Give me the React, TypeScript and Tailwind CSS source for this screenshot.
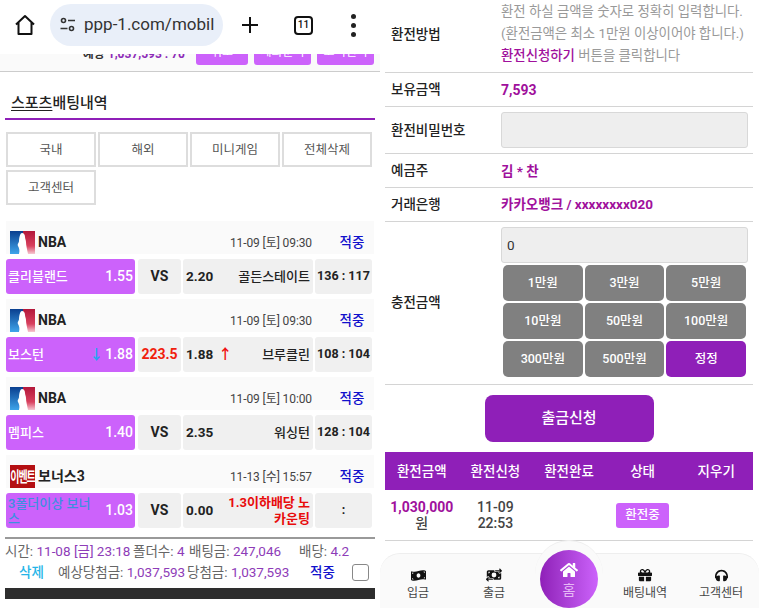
import React from 'react';
import { FaMoneyBillWave, FaGift, FaHome, FaHeadphones } from 'react-icons/fa';
import { FaMoneyBillTransfer } from 'react-icons/fa6';

const FONT = "font-['Roboto','Noto_Sans_CJK_KR',sans-serif]";

const games = [
  { logo: 'nba', league: 'NBA', time: '11-09 [토] 09:30', home: '클리블랜드', homeOdds: '1.55', mid: 'VS', awayOdds: '2.20', away: '골든스테이트', score: '136 : 117' },
  { logo: 'nba', league: 'NBA', time: '11-09 [토] 09:30', home: '보스턴', homeOdds: '1.88', mid: '223.5', awayOdds: '1.88', away: '브루클린', score: '108 : 104', arrows: true },
  { logo: 'nba', league: 'NBA', time: '11-09 [토] 10:00', home: '멤피스', homeOdds: '1.40', mid: 'VS', awayOdds: '2.35', away: '워싱턴', score: '128 : 104' },
  { logo: 'event', league: '보너스3', time: '11-13 [수] 15:57', home: '3폴더이상 보너스', homeOdds: '1.03', mid: 'VS', awayOdds: '0.00', away: '1.3이하배당 노카운팅', score: ':', bonus: true },
];

function NbaLogo() {
  return (
    <svg width="25" height="23" viewBox="0 0 25 23" className="shrink-0">
      <defs>
        <linearGradient id="nbaBlue" x1="0" y1="0" x2="0" y2="1">
          <stop offset="0" stopColor="#0a3f8f" />
          <stop offset="1" stopColor="#3fa4ea" />
        </linearGradient>
        <linearGradient id="nbaRed" x1="0" y1="0" x2="0" y2="1">
          <stop offset="0" stopColor="#b3173a" />
          <stop offset="0.65" stopColor="#d8405e" />
          <stop offset="1" stopColor="#f6c8d2" />
        </linearGradient>
      </defs>
      <rect width="13" height="23" fill="url(#nbaBlue)" />
      <rect x="13" width="12" height="23" fill="url(#nbaRed)" />
      <path d="M12 2c2 0 3 2 3 4 0 2 1 3 1 5 0 3 1 7 2 12H9c1-4 0-6-1-8-1-2 1-3 1-5 0-3 1-8 3-8z" fill="#fff" />
    </svg>
  );
}

function EventLogo() {
  return (
    <div className="w-[25px] h-[23px] shrink-0 bg-[#b40f12] flex items-center justify-center text-white text-[10px] font-bold leading-none tracking-[-1px] overflow-hidden">
      <span className="scale-y-150">이벤트</span>
    </div>
  );
}

function Game({ game }: { game: (typeof games)[number] }) {
  return (
    <div className="mb-[5px]">
      <div className="h-[33px] bg-[#fafafa] flex items-center pl-[4px] pt-[10px] mb-[5px]">
        {game.logo === 'nba' ? <NbaLogo /> : <EventLogo />}
        <span className="ml-[3px] text-[14px] font-bold text-[#222] flex-1">{game.league}</span>
        <span className="text-[12px] tracking-[-0.1px] text-[#444] mr-[2px]">{game.time}</span>
        <span className="w-[60px] pl-[16px] text-center text-[13.5px] font-medium text-[#1010cc]">적중</span>
      </div>
      <div className="flex h-[35px] gap-[2px] text-[13px]">
        <div className="w-[129px] mr-px bg-[#cc62fb] rounded-[3px] flex items-center justify-between px-[2px] font-medium text-white">
          <span className={game.bonus ? 'text-[#3d8fe0] leading-[15px] w-[92px]' : ''}>{game.home}</span>
          <span className="flex items-center gap-[2px] text-[14px] shrink-0">
            {game.arrows && <span className="text-[#25a5f0] text-[14px] font-bold">↓</span>}
            {game.homeOdds}
          </span>
        </div>
        <div className={`w-[43px] bg-[#f0f0f0] rounded-[3px] flex items-center justify-center font-bold text-[14px] ${game.mid === 'VS' ? 'text-[#222]' : 'text-[#f0200c]'}`}>
          {game.mid}
        </div>
        <div className="w-[130px] bg-[#f0f0f0] rounded-[3px] flex items-center justify-between px-[3px] font-medium text-[#222]">
          <span className="font-bold text-[13.5px] flex items-center gap-[5px] shrink-0">
            {game.awayOdds}
            {game.arrows && <span className="text-[#f01010] text-[14px]">↑</span>}
          </span>
          <span className={game.bonus ? 'text-[#e80c0c] font-bold text-right leading-[16px] w-[86px]' : ''}>{game.away}</span>
        </div>
        <div className="w-[57px] bg-[#f0f0f0] rounded-[3px] flex items-center justify-center font-bold text-[#222] text-[12.5px]">
          {game.score}
        </div>
      </div>
    </div>
  );
}

function LeftPanel() {
  return (
    <div className="w-[380px] shrink-0 flex flex-col bg-white">
      <div className="h-[54px] pb-[4px] flex items-center shrink-0">
        <svg width="24" height="24" viewBox="0 0 24 24" fill="none" stroke="#111" strokeWidth="2" className="ml-[13px]">
          <path d="M3 11.5 12 3l9 8.5M5.5 9.5V21h13V9.5" strokeLinejoin="round" />
        </svg>
        <div className="ml-[13px] w-[173px] h-[42px] rounded-full bg-[#e9eff9] flex items-center pl-[9px] pr-[9px] overflow-hidden">
          <svg width="18" height="16" viewBox="0 0 18 16" fill="none" stroke="#333" strokeWidth="1.6" className="shrink-0">
            <circle cx="4.5" cy="3.5" r="2" />
            <path d="M9 3.5h7M1.5 11.5h7" />
            <circle cx="12.5" cy="11.5" r="2" />
          </svg>
          <span className="ml-[7px] text-[17px] text-[#333] whitespace-nowrap overflow-hidden">ppp-1.com/mobile</span>
        </div>
        <svg width="20" height="20" viewBox="0 0 20 20" stroke="#111" strokeWidth="2" className="ml-[17px]">
          <path d="M10 2v16M2 10h16" />
        </svg>
        <div className="ml-[34px] w-[19px] h-[19px] border-2 border-[#111] rounded-[4px] flex items-center justify-center text-[10px] font-medium text-[#111] leading-none">
          11
        </div>
        <div className="ml-[38px] flex flex-col gap-[4px]">
          <span className="w-[5px] h-[5px] rounded-full bg-[#222]" />
          <span className="w-[5px] h-[5px] rounded-full bg-[#222]" />
          <span className="w-[5px] h-[5px] rounded-full bg-[#222]" />
        </div>
      </div>

      <div className="h-[18px] shrink-0 bg-[#fafafa] border-b border-[#ccc] overflow-hidden flex justify-end items-end gap-[6px] pr-[6px] pb-[6px] text-[12px]">
        <span className="mr-[5px] text-[#8e2bb8] font-bold leading-[20px] mb-[1px]"><span className="text-[#333]">예상 </span>1,037,593 : 70</span>
        <div className="w-[52px] h-[22px] shrink-0 bg-[#cc62fb] rounded-[3px] text-white text-center">취소</div>
        <div className="w-[57px] h-[22px] shrink-0 bg-[#cc62fb] rounded-[3px] text-white text-center">계좌문의</div>
        <div className="w-[57px] h-[22px] shrink-0 bg-[#cc62fb] rounded-[3px] text-white text-center">고객센터</div>
      </div>

      <div className="mx-[5px] mt-[19px] pl-[6px] pb-[3px] border-b-2 border-[#8f1fb8] text-[15px] font-medium text-[#222] leading-[24px]">
        <span className="underline underline-offset-2">스포츠</span>배팅내역
      </div>

      <div className="grid grid-cols-[90px_90px_90px_90px] gap-x-[2px] gap-y-[3px] ml-[6px] mt-[12px] text-[12.5px] text-[#555]">
        {['국내', '해외', '미니게임', '전체삭제', '고객센터'].map((label) => (
          <div key={label} className="h-[35px] pt-[2px] border-2 border-[#ddd] flex items-center justify-center">{label}</div>
        ))}
      </div>

      <div className="mx-[6px] mt-[16px]">
        {games.map((g, i) => <Game key={i} game={g} />)}
      </div>

      <div className="mx-[5px] mt-[4px] border-t-2 border-[#999] pt-[2px] text-[13.5px] text-[#666] leading-[21px]">
        <div className="flex whitespace-nowrap">
          <span className="w-[128px] shrink-0">시간: <span className="text-[#8e3cb8]">11-08 [금] 23:18</span></span>
          <span className="w-[56px] shrink-0">폴더수: <span className="text-[#8e3cb8]">4</span></span>
          <span className="w-[110px] shrink-0">배팅금: <span className="text-[#8e3cb8]">247,046</span></span>
          <span>배당: <span className="text-[#8e3cb8]">4.2</span></span>
        </div>
        <div className="flex items-center whitespace-nowrap">
          <span className="ml-[14px] w-[39px] shrink-0 text-[#25b5e8] font-medium">삭제</span>
          <span className="w-[129px] shrink-0">예상당첨금: <span className="text-[#8e3cb8]">1,037,593</span></span>
          <span className="w-[123px] shrink-0">당첨금: <span className="text-[#8e3cb8]">1,037,593</span></span>
          <span className="w-[42px] shrink-0 text-[#1010cc] font-medium">적중</span>
          <span className="w-[17px] h-[17px] shrink-0 border border-[#888] rounded-[3px] bg-white" />
        </div>
      </div>
      <div className="mx-[5px] mt-[5px] h-[11px] bg-[#2e2e2e] shrink-0" />
    </div>
  );
}

function FormRow({ label, heightClass, children }: { label: string; heightClass: string; children: React.ReactNode }) {
  return (
    <div className={`flex items-center border-b border-[#d4d4d4] ${heightClass}`}>
      <div className="w-[116px] pl-[6px] text-[13.5px] font-medium text-[#222] shrink-0">{label}</div>
      <div className="flex-1">{children}</div>
    </div>
  );
}

function RightPanel() {
  const amounts = ['1만원', '3만원', '5만원', '10만원', '50만원', '100만원', '300만원', '500만원'];
  return (
    <div className="w-[379px] shrink-0 pl-[5px] pr-[6px] bg-white">
      <FormRow label="환전방법" heightClass="h-[73px] pb-[4px]">
        <div className="text-[13.4px] leading-[22px] text-[#999] whitespace-nowrap">
          <div>환전 하실 금액을 숫자로 정확히 입력합니다.</div>
          <div>(환전금액은 최소 1만원 이상이어야 합니다.)</div>
          <div><span className="text-[#a0109c] font-medium">환전신청하기</span> 버튼을 클릭합니다</div>
        </div>
      </FormRow>
      <FormRow label="보유금액" heightClass="h-[34px]">
        <span className="text-[14px] font-bold text-[#a0109c]">7,593</span>
      </FormRow>
      <FormRow label="환전비밀번호" heightClass="h-[47px]">
        <div className="w-[247px] h-[36px] bg-[#eee] border border-[#d8d8d8] rounded-[3px]" />
      </FormRow>
      <FormRow label="예금주" heightClass="h-[34px]">
        <span className="text-[13.5px] font-bold text-[#a0109c]">김 * 찬</span>
      </FormRow>
      <FormRow label="거래은행" heightClass="h-[34px] pb-[1px]">
        <span className="text-[13.5px] font-bold text-[#a0109c]">카카오뱅크 / xxxxxxxx020</span>
      </FormRow>
      <FormRow label="충전금액" heightClass="h-[163px] pb-[2px]">
        <div className="w-[247px] h-[36px] bg-[#eee] border border-[#d8d8d8] rounded-[3px] flex items-center pl-[5px] text-[13.5px] text-[#333]">0</div>
        <div className="grid grid-cols-3 gap-[2px] mt-[2px] px-[2px] w-[247px]">
          {amounts.map((a) => (
            <div key={a} className="h-[36px] bg-[#808080] rounded-[5px] flex items-center justify-center text-[12.5px] font-medium text-white">{a}</div>
          ))}
          <div className="h-[36px] bg-[#8f1fb8] rounded-[5px] flex items-center justify-center text-[12.5px] font-medium text-white">정정</div>
        </div>
      </FormRow>
      <div className="mt-[10px] mx-auto w-[169px] h-[47px] bg-[#8f1fb8] rounded-[8px] flex items-center justify-center text-[15px] font-medium text-white">
        출금신청
      </div>
      <div className="mt-[10px] grid grid-cols-5 h-[38px] items-center bg-[#8f1fb8] text-white text-[13.5px] font-medium text-center">
        {['환전금액', '환전신청', '환전완료', '상태', '지우기'].map((h) => <div key={h}>{h}</div>)}
      </div>
      <div className="grid grid-cols-5 h-[51px] items-center border-b border-[#d4d4d4] text-center text-[14px] leading-[16px] font-medium text-[#444]">
        <div><span className="text-[#a0109c] font-bold">1,030,000</span><br />원</div>
        <div>11-09<br />22:53</div>
        <div />
        <div className="flex justify-center">
          <span className="w-[53px] h-[25px] bg-[#cc62fb] rounded-[3px] text-white text-[12.5px] flex items-center justify-center">환전중</span>
        </div>
        <div />
      </div>
    </div>
  );
}

function BottomNav() {
  const item = 'flex flex-col items-center text-[12px] leading-[16px] text-[#444]';
  return (
    <div className="absolute left-[380px] bottom-0 w-[379px] h-[55px] bg-[#fafafa] rounded-t-[20px] border-t border-[#eee] flex items-end pb-[7px]">
      <div className="absolute left-[155px] -top-[14px] w-[68px] h-[68px] rounded-full bg-[#fafafa] border-t border-[#eee]" />
      <div className={`${item} w-[76px]`}><FaMoneyBillWave size={15} color="#111" className="mb-[2px]" />입금</div>
      <div className={`${item} w-[76px]`}><FaMoneyBillTransfer size={16} color="#111" className="mb-[2px]" />출금</div>
      <div className="relative w-[75px] h-[40px]">
        <div className="absolute left-[8px] -top-[11px] w-[58px] h-[58px] rounded-full bg-gradient-to-r from-[#8f1fb8] to-[#cc62fb] flex flex-col items-center justify-center text-[#e6b8f5] text-[14px] leading-[16px]">
          <FaHome size={18} color="#fff" />
          <span className="mt-[3px]">홈</span>
        </div>
      </div>
      <div className={`${item} w-[76px]`}><FaGift size={14} color="#111" className="mb-[3px]" />배팅내역</div>
      <div className={`${item} w-[76px]`}><FaHeadphones size={13} color="#111" className="mb-[3px]" />고객센터</div>
    </div>
  );
}

export default function App() {
  return (
    <div className={`relative flex w-[759px] h-[608px] overflow-hidden bg-white ${FONT}`}>
      <LeftPanel />
      <RightPanel />
      <BottomNav />
    </div>
  );
}
